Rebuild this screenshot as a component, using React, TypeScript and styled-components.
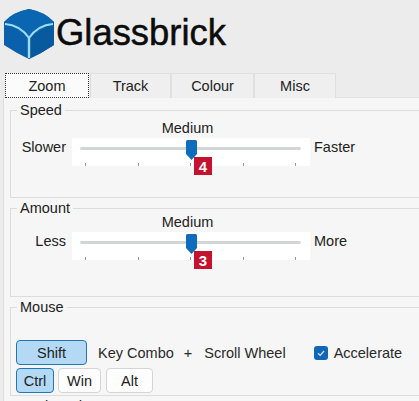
import React from "react";
import styled, { createGlobalStyle } from "styled-components";

const GlobalStyle = createGlobalStyle`
  html, body {
    margin: 0;
    padding: 0;
    background: #ececec;
  }
  body {
    font-family: "Liberation Sans", Arial, sans-serif;
    color: #222;
  }
`;

const Page = styled.div`
  width: 419px;
  height: 401px;
  overflow: hidden;
  background: #ececec;
`;

const Header = styled.header`
  display: flex;
  align-items: flex-start;
  height: 73px;
  padding: 9px 0 0 4px;
  box-sizing: border-box;
`;

const Title = styled.h1`
  margin: 4px 0 0 2px;
  font-size: 36.4px;
  line-height: 40px;
  font-weight: 400;
  color: #0c0c0c;
  -webkit-text-stroke: 0.5px #0c0c0c;
`;

const TabStrip = styled.div`
  display: flex;
  height: 25px;
  padding-left: 5px;
`;

const Tab = styled.div<{ $width: number; $active?: boolean }>`
  width: ${({ $width }) => $width}px;
  box-sizing: border-box;
  display: flex;
  align-items: center;
  justify-content: center;
  font-size: 14.5px;
  color: #222;
  background: ${({ $active }) => ($active ? "#fbfbfb" : "#efefef")};
  border: ${({ $active }) => ($active ? "1px dotted #333" : "1px solid #e0e0e0")};
  border-bottom: ${({ $active }) => ($active ? "1px dotted #333" : "none")};
  margin-right: ${({ $active }) => ($active ? "1px" : "0")};
`;

const Panel = styled.div`
  margin-left: 3px;
  width: 440px;
  padding: 4px 0 0 6px;
  box-sizing: border-box;
  background: #f6f6f6;
  border-left: 1px solid #dedede;
  border-top: 1px solid #e2e2e2;
  height: 310px;
  margin-top: -1px;
`;

const Group = styled.fieldset<{ $height: number }>`
  margin: 0 0 2px;
  padding: 0;
  height: ${({ $height }) => $height}px;
  box-sizing: border-box;
  min-width: 0;
  border: 1px solid #dcdcdc;
  border-right: none;
`;

const GroupTitle = styled.legend`
  margin-left: 6px;
  padding: 0 3px;
  font-size: 14.5px;
  line-height: 16px;
  color: #222;
`;

const SliderGrid = styled.div<{ $captionHeight: number }>`
  display: grid;
  grid-template-columns: 55px 6px 238px auto;
  grid-template-rows: ${({ $captionHeight }) => $captionHeight}px 28px;
  align-items: center;
`;

const Caption = styled.div<{ $lift: number }>`
  grid-column: 3;
  grid-row: 1;
  padding: 0 7px ${({ $lift }) => $lift}px 0;
  text-align: center;
  font-size: 14.5px;
  color: #222;
`;

const SideLabel = styled.div<{ $side: "left" | "right" }>`
  grid-row: 2;
  grid-column: ${({ $side }) => ($side === "left" ? 1 : 4)};
  align-self: start;
  font-size: 14.5px;
  line-height: 18px;
  text-align: ${({ $side }) => ($side === "left" ? "right" : "left")};
  padding-left: ${({ $side }) => ($side === "right" ? "4px" : "0")};
  color: #222;
`;

const SliderBody = styled.div`
  grid-row: 2;
  grid-column: 3;
  position: relative;
  width: 238px;
  height: 28px;
  background: #fff;
`;

const Track = styled.div`
  margin: 9px 9px 0 8px;
  height: 3px;
  background: #d4d6d6;
  border: 1px solid #e4e4e4;
  border-width: 0 1px;
`;

const Ticks = styled.div`
  display: flex;
  justify-content: space-between;
  margin: 13px 14px 0 13px;
`;

const Tick = styled.span`
  width: 1px;
  height: 3px;
  background: #9a9a9a;
`;

const Thumb = styled.svg`
  position: absolute;
  left: 114px;
  top: 2px;
`;

const Badge = styled.div`
  position: absolute;
  left: 122px;
  top: 19px;
  width: 18px;
  height: 18px;
  display: flex;
  align-items: center;
  justify-content: center;
  background: #c4122f;
  color: #fff;
  font-size: 15px;
  font-weight: 700;
  z-index: 1;
`;

const KeyRow = styled.div<{ $top: number }>`
  display: flex;
  align-items: center;
  margin: ${({ $top }) => $top}px 0 0 5px;
  font-size: 14.5px;
  color: #2a2a2a;
`;

const KeyButton = styled.div<{ $width: number; $on?: boolean }>`
  width: ${({ $width }) => $width}px;
  height: 25px;
  box-sizing: border-box;
  display: flex;
  align-items: center;
  justify-content: center;
  margin-right: ${({ $on }) => ($on ? "4px" : "5px")};
  border-radius: 4px;
  font-size: 14.5px;
  color: #222;
  background: ${({ $on }) => ($on ? "#b3d9f5" : "#fdfdfd")};
  border: 1px solid ${({ $on }) => ($on ? "#1f78b4" : "#d4d4d4")};
`;

const ComboText = styled.span<{ $left: number }>`
  margin-left: ${({ $left }) => $left}px;
`;

const CheckBox = styled.span`
  width: 14px;
  height: 14px;
  margin-left: 28px;
  border-radius: 3px;
  background: #0f67b5;
  display: flex;
  align-items: center;
  justify-content: center;
`;

function Logo() {
  return (
    <svg width="50" height="50" viewBox="0 0 50 50" aria-hidden="true">
      <path d="M25 0 Q41 3 50 13 L50 36 Q38 44 25 50 Q12 44 0 36 L0 13 Q9 3 25 0 Z" fill="#0a60aa" />
      <path d="M25 0 Q41 3 50 13 L25 29 L0 13 Q9 3 25 0 Z" fill="#0b66b2" />
      <path d="M25 29 L50 13 L50 36 Q38 44 25 50 Z" fill="#085a9f" />
      <path d="M1 15 Q16 16 25 29 Q34 16 49 15" fill="none" stroke="#9fdcf5" strokeWidth="2" />
      <path d="M25 29 L25 49" stroke="#9fdcf5" strokeWidth="2.4" />
    </svg>
  );
}

function SliderThumb() {
  return (
    <Thumb width="11" height="20" viewBox="0 0 11 20" aria-hidden="true">
      <path d="M1.5 0 H9.5 Q11 0 11 1.5 V14 L5.5 20 L0 14 V1.5 Q0 0 1.5 0 Z" fill="#0f6cbd" />
    </Thumb>
  );
}

function Slider({ left, right, badge, captionHeight, lift }: { left: string; right: string; badge: number; captionHeight: number; lift: number }) {
  return (
    <SliderGrid $captionHeight={captionHeight}>
      <Caption $lift={lift}>Medium</Caption>
      <SideLabel $side="left">{left}</SideLabel>
      <SliderBody>
        <Track />
        <Ticks>
          {[0, 1, 2, 3, 4].map((t) => (
            <Tick key={t} />
          ))}
        </Ticks>
        <SliderThumb />
        <Badge>{badge}</Badge>
      </SliderBody>
      <SideLabel $side="right">{right}</SideLabel>
    </SliderGrid>
  );
}

export default function App() {
  return (
    <Page>
      <GlobalStyle />
      <Header>
        <Logo />
        <Title>Glassbrick</Title>
      </Header>
      <TabStrip>
        <Tab $width={84} $active>Zoom</Tab>
        <Tab $width={81}>Track</Tab>
        <Tab $width={83}>Colour</Tab>
        <Tab $width={82}>Misc</Tab>
      </TabStrip>
      <Panel>
        <Group $height={96}>
          <GroupTitle>Speed</GroupTitle>
          <Slider left="Slower" right="Faster" badge={4} captionHeight={20} lift={0} />
        </Group>
        <Group $height={97}>
          <GroupTitle>Amount</GroupTitle>
          <Slider left="Less" right="More" badge={3} captionHeight={16} lift={5} />
        </Group>
        <Group $height={97}>
          <GroupTitle>Mouse</GroupTitle>
          <KeyRow $top={25}>
            <KeyButton $width={71} $on>Shift</KeyButton>
            <ComboText $left={7}>Key Combo</ComboText>
            <ComboText $left={10}>+</ComboText>
            <ComboText $left={12}>Scroll Wheel</ComboText>
            <CheckBox>
              <svg width="10" height="10" viewBox="0 0 10 10" aria-hidden="true">
                <path d="M2 5.2 L4.2 7.4 L8 3" fill="none" stroke="#cfe6f8" strokeWidth="1.3" />
              </svg>
            </CheckBox>
            <ComboText $left={6}>Accelerate</ComboText>
          </KeyRow>
          <KeyRow $top={3}>
            <KeyButton $width={38} $on>Ctrl</KeyButton>
            <KeyButton $width={43}>Win</KeyButton>
            <KeyButton $width={47}>Alt</KeyButton>
          </KeyRow>
        </Group>
        <Group $height={60}>
          <GroupTitle>Keyboard</GroupTitle>
        </Group>
      </Panel>
    </Page>
  );
}
